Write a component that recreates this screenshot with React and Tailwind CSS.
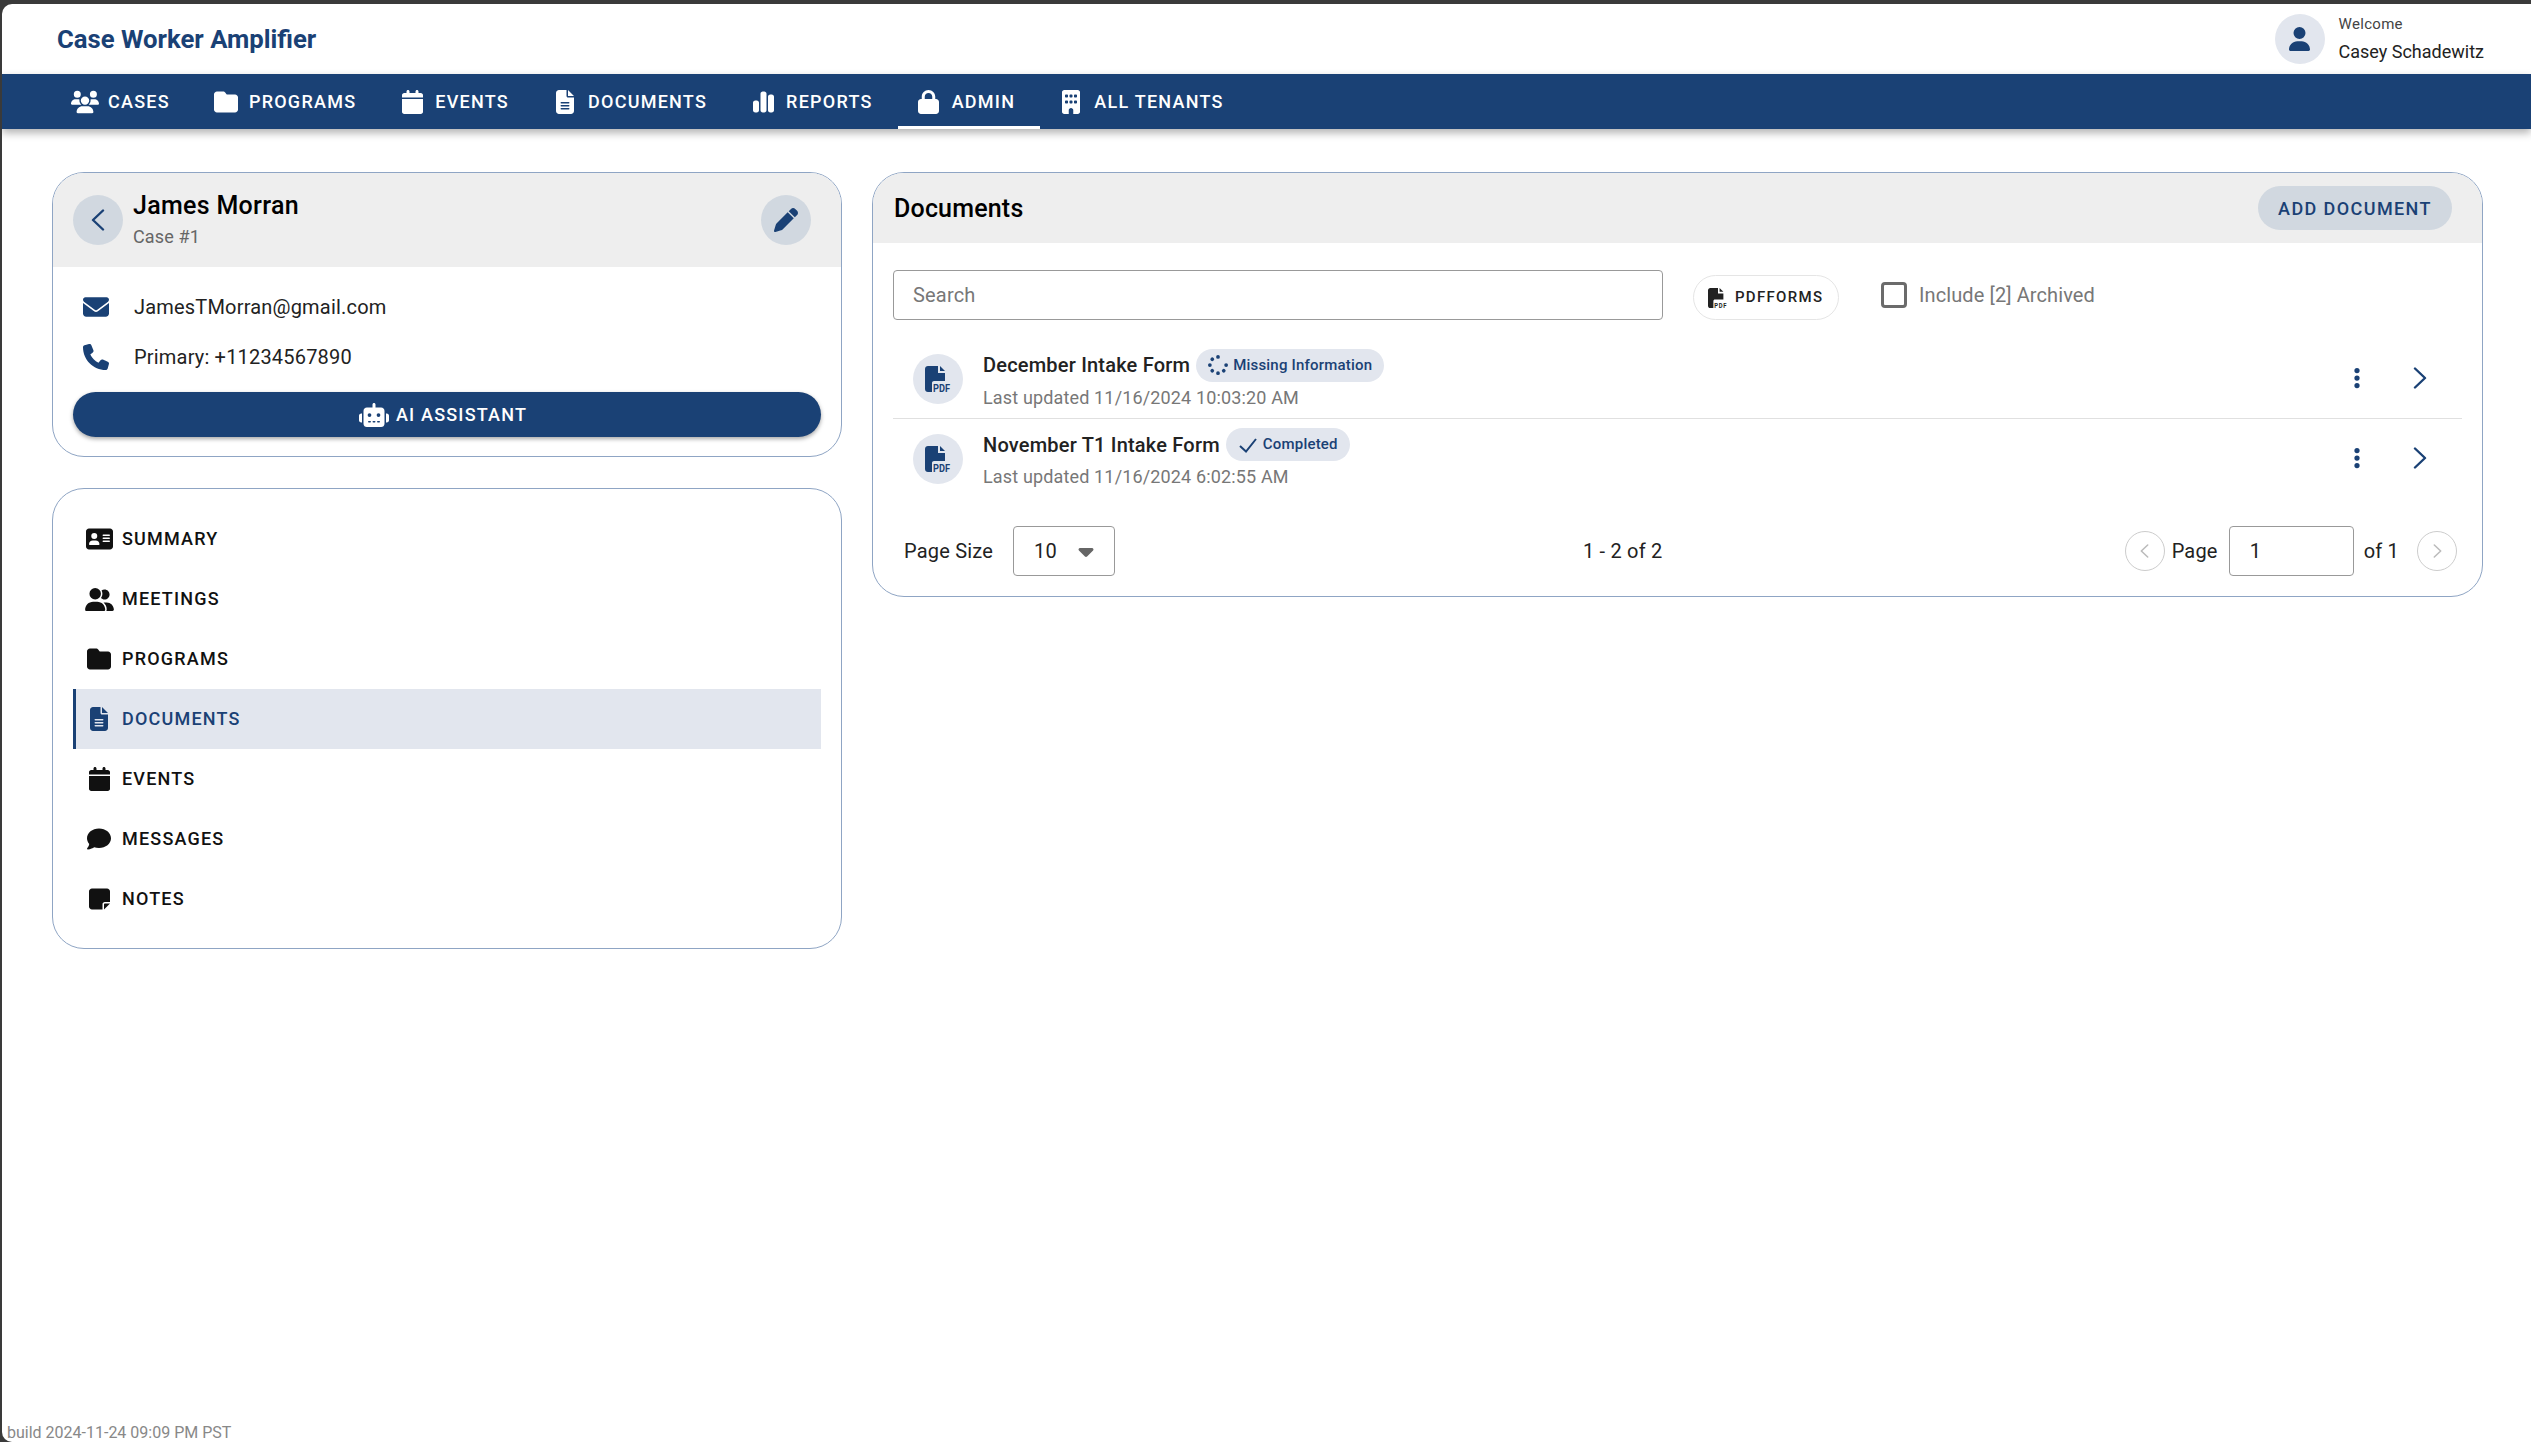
import React from 'react';
import {
  FaUsers, FaFolder, FaCalendar, FaFileLines, FaChartSimple, FaLock, FaBuilding, FaUser,
  FaPen, FaEnvelope, FaPhone, FaRobot, FaAddressCard, FaUserGroup, FaComment, FaNoteSticky,
  FaSpinner, FaEllipsisVertical, FaCaretDown,
} from 'react-icons/fa6';

const topTabs = [
  { label: 'CASES', icon: <FaUsers className="w-[28px] h-[24px]" /> },
  { label: 'PROGRAMS', icon: <FaFolder className="w-[24px] h-[24px]" /> },
  { label: 'EVENTS', icon: <FaCalendar className="w-[21px] h-[24px]" /> },
  { label: 'DOCUMENTS', icon: <FaFileLines className="w-[18px] h-[24px]" /> },
  { label: 'REPORTS', icon: <FaChartSimple className="w-[21px] h-[24px]" /> },
  { label: 'ADMIN', icon: <FaLock className="w-[21px] h-[24px]" />, active: true },
  { label: 'ALL TENANTS', icon: <FaBuilding className="w-[18px] h-[24px]" /> },
];

const sideItems = [
  { label: 'SUMMARY', icon: <FaAddressCard className="w-[27px] h-[24px]" /> },
  { label: 'MEETINGS', icon: <FaUserGroup className="w-[29px] h-[23px]" /> },
  { label: 'PROGRAMS', icon: <FaFolder className="w-[24px] h-[24px]" /> },
  { label: 'DOCUMENTS', icon: <FaFileLines className="w-[18px] h-[24px]" />, active: true },
  { label: 'EVENTS', icon: <FaCalendar className="w-[21px] h-[24px]" /> },
  { label: 'MESSAGES', icon: <FaComment className="w-[24px] h-[24px]" /> },
  { label: 'NOTES', icon: <FaNoteSticky className="w-[21px] h-[24px]" /> },
];

// file silhouette with the PDF mark in the cut-out corner
function PdfIcon({ className }) {
  return (
    <svg viewBox="0 0 26 26" className={`overflow-visible ${className}`} fill="currentColor">
      <path d="M3 0H13V7H20V15H9C7.9 15 7 15.9 7 17V26H3C1.3 26 0 24.7 0 23V3C0 1.3 1.3 0 3 0Z" />
      <path d="M15 0L20 5H15Z" />
      <text x="8" y="25.5" fontSize="10.5" fontWeight="700" fontFamily="Roboto, sans-serif" textLength="17" lengthAdjust="spacingAndGlyphs">PDF</text>
    </svg>
  );
}

function Chevron({ left, className }) {
  return (
    <svg viewBox="0 0 14 22" className={className} fill="none" stroke="currentColor" strokeWidth="2.4" strokeLinecap="round" strokeLinejoin="round">
      <path d={left ? 'M12 1.5L2 11L12 20.5' : 'M2 1.5L12 11L2 20.5'} />
    </svg>
  );
}

function DocRow({ title, chip, chipIcon, updated, divider }) {
  return (
    <div className={`flex items-center h-[79px] pl-[20px] pr-[35px] ${divider ? 'border-b border-[#e0e0e0]' : ''}`}>
      <div className="w-[50px] h-[50px] rounded-full bg-[#e2e6ee] flex items-center justify-center text-[#1a4175] shrink-0">
        <PdfIcon className="w-[26px] h-[26px]" />
      </div>
      <div className="ml-[20px] flex-1">
        <div className="flex items-center gap-[6px] h-[33px]">
          <span className="text-[20px] tracking-[0.2px] font-medium text-[#222]">{title}</span>
          <span className="h-[33px] px-[12px] rounded-full bg-[#e2e6ee] flex items-center gap-[5px] text-[15px] tracking-[0.2px] font-medium text-[#1a4175]">
            {chipIcon}
            {chip}
          </span>
        </div>
        <div className="mt-[4px] text-[18px] tracking-[0.15px] text-[#777] leading-[24px]">{updated}</div>
      </div>
      <FaEllipsisVertical className="-mt-[2px] w-[6px] h-[24px] text-[#1a4175]" />
      <Chevron className="-mt-[2px] ml-[53px] w-[14px] h-[22px] text-[#1a4175]" />
    </div>
  );
}

export default function App() {
  return (
    <div className="h-screen overflow-hidden bg-[#3a3a3a] pt-[4px] pl-[2px] font-[Roboto,sans-serif]">
      <div className="h-full bg-white rounded-tl-[10px] rounded-bl-[10px] overflow-hidden flex flex-col">

        {/* header */}
        <div className="h-[70px] shrink-0 flex items-center justify-between pl-[55px] pr-[47px]">
          <div className="text-[25.7px] font-bold text-[#1a4175]">Case Worker Amplifier</div>
          <div className="flex items-center gap-[14px]">
            <div className="w-[50px] h-[50px] rounded-full bg-[#e2e6ee] flex items-center justify-center text-[#1a4175]">
              <FaUser className="w-[21px] h-[24px]" />
            </div>
            <div>
              <div className="text-[15px] tracking-[0.3px] leading-[20px] text-[#444]">Welcome</div>
              <div className="mt-[6px] text-[18px] leading-[24px] text-[#222]">Casey Schadewitz</div>
            </div>
          </div>
        </div>

        {/* top nav */}
        <div className="h-[55px] shrink-0 bg-[#1a4175] shadow-[0_4px_8px_rgba(0,0,0,0.3)] flex items-stretch pl-[52px] text-white">
          {topTabs.map((t) => (
            <div key={t.label} className={`flex items-center pl-[16px] pr-[25px] text-[18px] font-medium tracking-[1.25px] ${t.active ? 'border-b-[3px] border-white pt-[3px]' : ''}`}>
              <div className="w-[30px] flex justify-center">{t.icon}</div>
              <span className="ml-[8px]">{t.label}</span>
            </div>
          ))}
        </div>

        {/* content */}
        <div className="flex-1 flex items-start gap-[30px] pt-[43px] pl-[50px] pr-[48px]">
          <div className="w-[790px] shrink-0 flex flex-col gap-[31px]">

            {/* case card */}
            <div className="h-[285px] rounded-[32px] border border-[#8fa5c4] overflow-hidden">
              <div className="h-[94px] bg-[#eeeeee] flex items-center pl-[20px] pr-[30px]">
                <div className="w-[50px] h-[50px] rounded-full bg-[#d1d8e0] flex items-center justify-center text-[#1a4175]">
                  <Chevron left className="w-[14px] h-[22px]" />
                </div>
                <div className="ml-[10px] flex-1 -mt-[2px]">
                  <div className="text-[25px] tracking-[0.3px] font-medium leading-[32px] text-black">James Morran</div>
                  <div className="text-[18px] tracking-[0.15px] leading-[24px] text-[#666] mt-[3px]">Case #1</div>
                </div>
                <div className="w-[50px] h-[50px] rounded-full bg-[#d1d8e0] flex items-center justify-center text-[#1a4175]">
                  <FaPen className="w-[24px] h-[24px]" />
                </div>
              </div>
              <div className="px-[20px] pt-[15px]">
                <div className="h-[50px] flex items-center text-[20px] tracking-[0.19px] text-[#222]">
                  <FaEnvelope className="ml-[10px] w-[26px] h-[26px] text-[#1a4175]" />
                  <span className="ml-[25px]">JamesTMorran@gmail.com</span>
                </div>
                <div className="h-[50px] flex items-center text-[20px] tracking-[0.19px] text-[#222]">
                  <FaPhone className="ml-[10px] w-[26px] h-[26px] text-[#1a4175]" />
                  <span className="ml-[25px]">Primary: +11234567890</span>
                </div>
                <div className="h-[45px] mt-[10px] pr-[8px] rounded-full bg-[#1a4175] shadow-[0_2px_4px_rgba(0,0,0,0.35)] flex items-center justify-center gap-[7px] text-white text-[18px] font-medium tracking-[1.2px]">
                  <FaRobot className="w-[30px] h-[24px]" />
                  AI ASSISTANT
                </div>
              </div>
            </div>

            {/* side menu */}
            <div className="h-[461px] rounded-[32px] border border-[#8fa5c4] px-[20px] pt-[20px]">
              {sideItems.map((s) => (
                <div key={s.label} className={`h-[60px] flex items-center text-[18px] font-medium tracking-[1.2px] border-l-[3px] ${s.active ? 'bg-[#e2e6ee] border-[#1a4175] text-[#1a4175]' : 'border-transparent text-[#111]'}`}>
                  <div className="ml-[8px] w-[30px] flex justify-center">{s.icon}</div>
                  <span className="ml-[8px] pb-[1px]">{s.label}</span>
                </div>
              ))}
            </div>
          </div>

          {/* documents card */}
          <div className="flex-1 h-[425px] rounded-[32px] border border-[#8fa5c4] overflow-hidden">
            <div className="h-[70px] bg-[#eeeeee] flex items-center justify-between pl-[21px] pr-[30px]">
              <div className="pt-[1px] text-[25px] tracking-[0.19px] font-medium text-black">Documents</div>
              <div className="h-[44px] w-[194px] rounded-full bg-[#d1d8e0] flex items-center justify-center text-[18px] font-medium tracking-[1.4px] text-[#1a4175]">ADD DOCUMENT</div>
            </div>

            <div className="flex items-center pt-[27px] pl-[20px]">
              <div className="w-[770px] h-[50px] rounded-[4px] border border-[#999] flex items-center pl-[19px] text-[20px] tracking-[0.19px] text-[#777]">Search</div>
              <div className="ml-[30px] w-[146px] h-[45px] rounded-full border border-[#e5e5e5] flex items-center pl-[14px] mt-[5px] text-[15px] font-medium tracking-[1.3px] text-[#222]">
                <PdfIcon className="w-[20px] h-[20px]" />
                <span className="ml-[7px]">PDFFORMS</span>
              </div>
              <div className="ml-[42px] w-[26px] h-[26px] rounded-[4px] border-[3px] border-[#6b6b6b]" />
              <span className="ml-[12px] text-[20px] tracking-[0.1px] text-[#777]">Include [2] Archived</span>
            </div>

            <div className="mt-[20px] mx-[20px]">
              <DocRow divider title="December Intake Form" chip="Missing Information" chipIcon={<FaSpinner className="w-[20px] h-[20px]" />} updated="Last updated 11/16/2024 10:03:20 AM" />
              <DocRow
                title="November T1 Intake Form"
                chip="Completed"
                chipIcon={
                  <svg viewBox="0 0 20 20" className="w-[20px] h-[20px]" fill="none" stroke="currentColor" strokeWidth="2">
                    <path d="M2 11L8 16.5L18 4" />
                  </svg>
                }
                updated="Last updated 11/16/2024 6:02:55 AM"
              />
            </div>

            <div className="mt-[28px] flex items-center pl-[31px] pr-[25px] text-[20px] tracking-[0.19px] text-[#222]">
              <span>Page Size</span>
              <div className="ml-[20px] w-[102px] h-[50px] rounded-[4px] border border-[#999] flex items-center justify-between pl-[20px] pr-[18px]">
                <span>10</span>
                <FaCaretDown className="w-[20px] h-[24px] text-[#666]" />
              </div>
              <span className="ml-[468px]">1 - 2 of 2</span>
              <div className="ml-auto flex items-center">
                <div className="w-[40px] h-[40px] rounded-full border border-[#ccc] flex items-center justify-center text-[#bbb]">
                  <Chevron left className="w-[9px] h-[14px]" />
                </div>
                <span className="ml-[7px]">Page</span>
                <div className="ml-[11px] w-[125px] h-[50px] rounded-[4px] border border-[#999] flex items-center pl-[20px]">1</div>
                <span className="ml-[10px]">of 1</span>
                <div className="ml-[18px] w-[40px] h-[40px] rounded-full border border-[#ccc] flex items-center justify-center text-[#bbb]">
                  <Chevron className="w-[9px] h-[14px]" />
                </div>
              </div>
            </div>
          </div>
        </div>

        <div className="shrink-0 pl-[5px] h-[19px] leading-[20px] text-[16px] text-[#888]">build 2024-11-24 09:09 PM PST</div>
      </div>
    </div>
  );
}
